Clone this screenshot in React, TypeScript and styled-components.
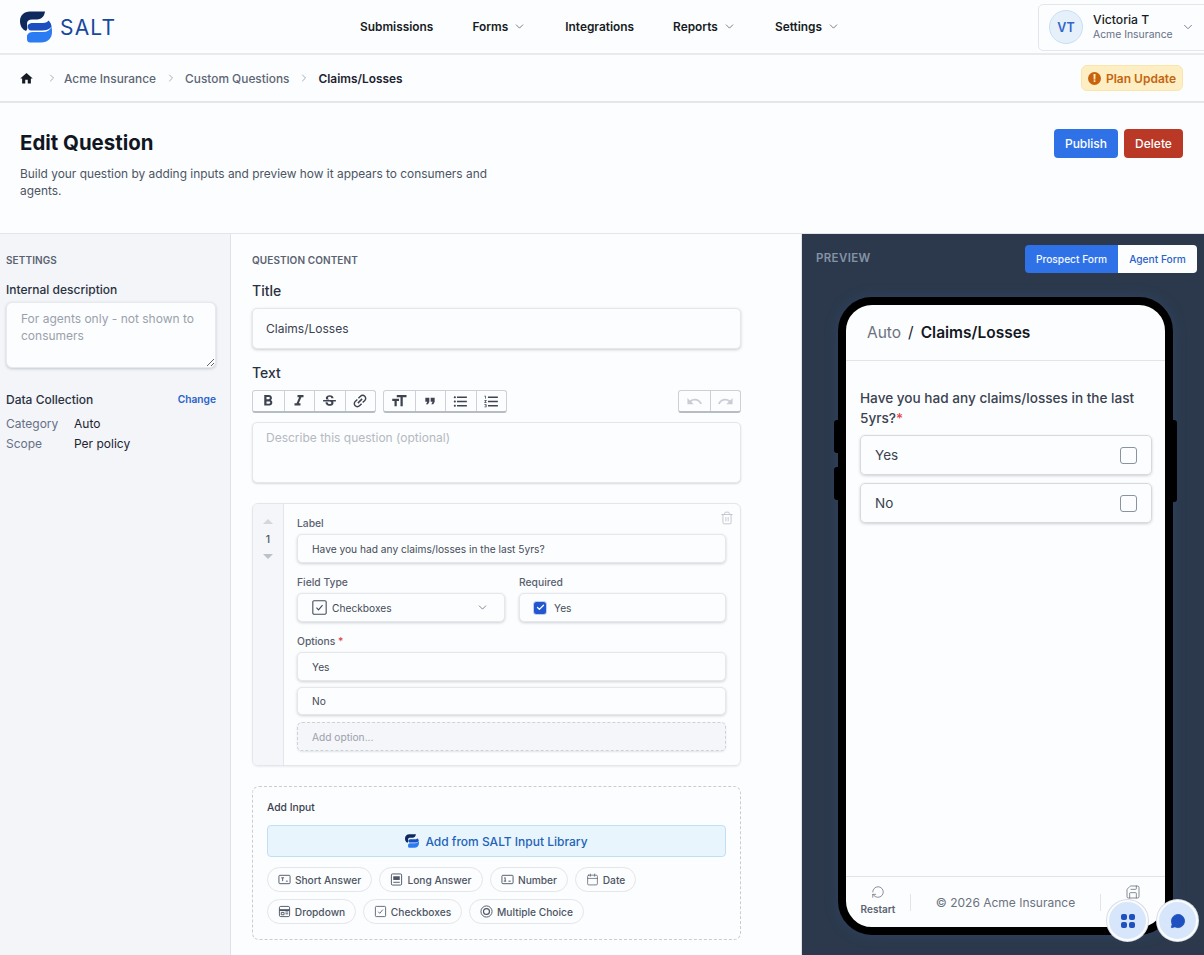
import React from "react";
import styled, { createGlobalStyle } from "styled-components";
import { ChevronRight, ChevronDown, Trash2, Check, Calendar, RotateCw, Save, MessageCircle } from "lucide-react";
import {
  MdFormatSize, MdFormatQuote, MdHome, MdFormatBold, MdFormatItalic, MdStrikethroughS, MdLink,
  MdFormatListBulleted, MdFormatListNumbered, MdUndo, MdRedo,
} from "react-icons/md";

const Global = createGlobalStyle`
  html, body { margin: 0; padding: 0; background: #fcfdfe; }
  * { box-sizing: border-box; }
  body { font-family: Inter, "Liberation Sans", sans-serif; color: #111827; -webkit-font-smoothing: antialiased; }
  input, textarea { font-family: inherit; }
`;

const Page = styled.div`
  width: 1204px; height: 955px; overflow: hidden; display: flex; flex-direction: column; position: relative; background: #fcfdfe;
`;
const TopBar = styled.header`
  height: 55px; flex: none; display: flex; align-items: center; border-bottom: 2px solid #e8eaed; padding-left: 20px; position: relative;
`;
const Brand = styled.div`
  display: flex; align-items: center; gap: 8px; width: 340px; flex: none; margin-top: 1px;
`;
const BrandName = styled.span`
  font-size: 21px; font-weight: 400; letter-spacing: 1.2px; color: #17479e; line-height: 1; margin-top: 1px;
`;
const Nav = styled.nav`
  display: flex; align-items: center; gap: 39px; flex: 1;
`;
const NavItem = styled.span`
  display: inline-flex; align-items: center; gap: 5px; font-size: 11.88px; font-weight: 600; color: #161b24; white-space: nowrap;
  svg { color: #5b6472; }
`;
const UserBox = styled.div`
  width: 172px; height: 47px; margin-top: 1px; margin-right: -6px; flex: none; border: 1px solid #e3e6ea; border-radius: 5px;
  display: flex; align-items: center; padding-left: 10px; gap: 10px;
`;
const Avatar = styled.div`
  width: 34px; height: 34px; flex: none; border-radius: 50%; background: #e6f0fb; border: 1px solid #c9def5; color: #2f66c8;
  font-size: 12.5px; font-weight: 600; display: flex; align-items: center; justify-content: center;
`;
const UserText = styled.div`
  display: flex; flex-direction: column; flex: 1; gap: 1px; min-width: 0; white-space: nowrap;
`;
const UserName = styled.span`
  font-size: 12.2px; font-weight: 500; color: #161b24; line-height: 15px;
`;
const UserOrg = styled.span`
  font-size: 10.4px; font-weight: 400; color: #667085; line-height: 14px;
`;
const Crumbs = styled.div`
  height: 48px; flex: none; display: flex; align-items: center; border-bottom: 2px solid #e4e6e9; padding: 0 21px;
`;
const CrumbLink = styled.span<{ $current?: boolean }>`
  font-size: 11.88px; font-weight: ${p => (p.$current ? 600 : 500)}; color: ${p => (p.$current ? "#1d2330" : "#5c6675")}; white-space: nowrap;
`;
const CrumbSep = styled.span`
  width: 29px; display: flex; justify-content: center; color: #8a93a0;
`;
const CrumbHome = styled.span`
  display: flex; color: #161b24; margin-left: -2px; width: 16px;
`;
const CrumbFirstSep = styled(CrumbSep)`
  width: 29px; padding-left: 5px;
`;
const CrumbSpacer = styled.div`flex: 1;`;
const PlanBadge = styled.div`
  width: 102px; height: 26px; background: #fdeec4; border: 1px solid #fbe5a8; border-radius: 6px; display: flex; align-items: center; justify-content: center; gap: 5px;
  font-size: 12px; font-weight: 600; color: #c4650f; white-space: nowrap;
`;
const AlertDot = styled.span`
  width: 13px; height: 13px; border-radius: 50%; background: #c9620c; color: #fdeec4; font-size: 10px; font-weight: 800; line-height: 13px; text-align: center;
`;
const PageHead = styled.div`
  height: 131px; flex: none; display: flex; justify-content: space-between; padding: 26px 21px 0 20px; border-bottom: 1px solid #e2e5e9;
`;
const HeadText = styled.div`width: 490px; padding-top: 1px;`;
const Title = styled.h1`
  margin: 0; font-size: 20.4px; font-weight: 700; line-height: 26px; color: #111722;
`;
const Sub = styled.p`
  margin: 9px 0 0; font-size: 11.9px; line-height: 17px; color: #4b5563;
`;
const Actions = styled.div`
  display: flex; gap: 6px; align-items: flex-start;
`;
const ActionBtn = styled.button<{ $bg: string; $w: number }>`
  height: 29px; width: ${p => p.$w}px; border: none; border-radius: 4px; background: ${p => p.$bg}; color: #fff; font-size: 12px; font-weight: 500; font-family: inherit; padding: 0;
`;
const Panels = styled.div`
  flex: 1; display: flex; min-height: 0;
`;
const Side = styled.aside`
  width: 231px; flex: none; background: #f3f5f9; border-right: 1px solid #dfe3e8; padding: 20px 14px 0 6px;
`;
const SectionLabel = styled.div`
  font-size: 10px; font-weight: 600; letter-spacing: .1px; color: #5a6270; line-height: 13px; text-transform: uppercase;
`;
const SideLabel = styled.div`
  font-size: 12px; font-weight: 500; color: #2a3140; margin-top: 15px; line-height: 15px;
`;
const SideArea = styled.textarea`
  display: block; width: 100%; height: 66px; margin: 5px 0 0; border: 1px solid #e7e9ed; border-radius: 6px; background: #fcfdfe;
  box-shadow: 0 1px 3px rgba(30, 40, 60, .22); padding: 7px 14px; font-size: 12px; line-height: 17px; resize: vertical; outline: none;
  &::placeholder { color: #9aa1ac; }
`;
const DataHead = styled.div`
  display: flex; justify-content: space-between; align-items: center; margin-top: 24px; height: 15px;
`;
const DataTitle = styled.span`
  font-size: 12px; font-weight: 500; color: #2a3140;
`;
const ChangeLink = styled.span`
  font-size: 10.2px; font-weight: 600; color: #2a62c9; margin-bottom: 2px;
`;
const MetaGrid = styled.dl`
  display: grid; grid-template-columns: 68px 1fr; grid-auto-rows: 20px; margin: 6px 0 0; align-items: center;
  font-size: 12px;
`;
const MetaKey = styled.dt`color: #667085;`;
const MetaVal = styled.dd`margin: 0; color: #1d2330;`;
const Editor = styled.main`
  width: 571px; flex: none; padding: 20px 60px 0 21px; overflow: hidden; border-right: 1px solid #dfe3e8;
`;
const FieldLabel = styled.div`
  font-size: 14px; font-weight: 500; color: #2a3140; line-height: 18px;
`;
const TitleLabel = styled(FieldLabel)`margin-top: 15px;`;
const TextLabel = styled(FieldLabel)`margin-top: 15px;`;
const BigInput = styled.input`
  display: block; width: 100%; height: 41px; margin-top: 8px; border: 1px solid #e5e7eb; border-radius: 5px; background: #fcfdfe;
  box-shadow: 0 1px 3px rgba(30, 40, 60, .22); padding: 0 13px; font-size: 12px; color: #394150; outline: none;
`;
const Toolbar = styled.div`
  display: flex; gap: 7px; margin-top: 8px;
`;
const ToolGroup = styled.div<{ $right?: boolean }>`
  display: flex; height: 23px; border: 1px solid #cdd1d6; border-bottom: 2px solid #b7bcc3; border-radius: 3px; overflow: hidden; background: #fcfdfe;
  ${p => (p.$right ? "margin-left: auto;" : "")}
`;
const ToolBtn = styled.span<{ $muted?: boolean }>`
  width: 30.5px; display: flex; align-items: center; justify-content: center; color: ${p => (p.$muted ? "#c9cdd3" : "#3d4450")};
  & + & { border-left: 1px solid #cdd1d6; }
`;
const DescBox = styled.textarea`
  display: block; width: 100%; height: 61px; margin: 9px 0 0; border: 1px solid #e5e7eb; border-radius: 5px; background: #fcfdfe; padding: 7px 13px;
  box-shadow: 0 1px 2px rgba(30, 40, 60, .16); font-size: 12px; line-height: 16px; outline: none; resize: none;
  &::placeholder { color: #b4b9c1; }
`;
const InputCard = styled.section`
  display: flex; height: 263px; margin-top: 20px; border: 1px solid #e3e6ea; border-radius: 6px; box-shadow: 0 1px 2px rgba(30, 40, 60, .08); overflow: hidden; position: relative;
`;
const Rail = styled.div`
  width: 31px; flex: none; background: #f4f6f9; border-right: 1px solid #e3e6ea; display: flex; flex-direction: column; align-items: center; padding-top: 15px;
`;
const RailUp = styled.span`
  width: 0; height: 0; border-left: 5px solid transparent; border-right: 5px solid transparent; border-bottom: 5px solid #d3d7dc;
`;
const RailDown = styled.span`
  width: 0; height: 0; border-left: 5px solid transparent; border-right: 5px solid transparent; border-top: 5px solid #bcc2ca;
`;
const RailNum = styled.span`
  font-size: 10.5px; color: #4b5563; line-height: 14px; margin: 9px 0 7px; font-weight: 500;
`;
const CardBody = styled.div`
  flex: 1; padding: 13px 14px 0 13px; display: flex; flex-direction: column;
`;
const TrashBtn = styled.span`
  position: absolute; top: 7px; right: 6px; color: #b4bac2; display: flex;
`;
const MiniLabel = styled.div`
  font-size: 10.3px; font-weight: 500; color: #59616f; line-height: 13px; margin-bottom: 4px;
`;
const Star = styled.span`color: #e5484d;`;
const MiniInput = styled.input<{ $h?: number }>`
  display: block; width: 100%; height: ${p => p.$h ?? 29}px; border: 1px solid #e5e7eb; border-radius: 5px; background: #fcfdfe; padding: 0 14px;
  box-shadow: 0 1px 3px rgba(30, 40, 60, .2); font-size: 10.2px; color: #434b58; outline: none; font-weight: 400; flex: none;
`;
const TwoCol = styled.div`
  display: grid; grid-template-columns: 208px 207px; gap: 14px; margin-top: 13px;
`;
const FakeField = styled.div`
  height: 29px; border: 1px solid #e5e7eb; border-radius: 5px; background: #fcfdfe; box-shadow: 0 1px 3px rgba(30, 40, 60, .2);
  display: flex; align-items: center; font-size: 10.2px; color: #434b58;
`;
const SelectField = styled(FakeField)`
  padding: 0 15px 0 13px; gap: 4px; svg:last-child { margin-left: auto; color: #667085; }
`;
const CheckField = styled(FakeField)`
  padding-left: 14px; gap: 8px;
`;
const CheckOn = styled.span`
  width: 12px; height: 12px; border-radius: 2.5px; background: #2257cf; color: #fff; display: flex; align-items: center; justify-content: center; box-shadow: 0 0 0 1px #bcd0f2;
`;
const OptionsBlock = styled.div`
  margin-top: 13px; display: flex; flex-direction: column;
`;
const OptionStack = styled.div`
  display: flex; flex-direction: column; gap: 6px;
`;
const AddOption = styled.div`
  height: 29px; border: 1px dashed #cdd2d9; border-radius: 5px; background: #f5f6f9; padding-left: 14px; display: flex; align-items: center; font-size: 10.2px; color: #9aa1ac;
  box-shadow: 0 1px 2px rgba(30, 40, 60, .12); margin-top: 1px;
`;
const AddBox = styled.section`
  height: 154px; margin-top: 20px; border: 1px dashed #c9cdd3; border-radius: 7px; padding: 14px 14px 0;
`;
const AddTitle = styled.div`
  font-size: 10.3px; font-weight: 500; color: #3a4250; line-height: 13px;
`;
const LibBtn = styled.div`
  height: 32px; margin-top: 11px; border: 1px solid #bfdff5; border-radius: 4px; background: #e9f5fd; display: flex; align-items: center; justify-content: center; gap: 6px;
  font-size: 12px; font-weight: 500; color: #2363b8;
`;
const ChipRow = styled.div`
  display: flex; flex-wrap: wrap; gap: 7px; margin-top: 10px;
`;
const Chip = styled.span<{ $w: number }>`
  height: 25px; width: ${p => p.$w}px; border: 1px solid #e3e6ea; border-radius: 13px; display: inline-flex; align-items: center; justify-content: center; gap: 4px;
  font-size: 10.2px; font-weight: 500; color: #4d5563; white-space: nowrap; background: #fcfdfe;
  svg { flex: none; color: #4d5563; }
`;
const Preview = styled.aside`
  flex: 1; background: #2c394c; position: relative; display: flex; flex-direction: column; padding: 11px 7px 0 14px; overflow: hidden;
`;
const PreviewHead = styled.div`
  display: flex; justify-content: space-between; align-items: center; height: 28px;
`;
const PreviewLabel = styled.span`
  font-size: 11.5px; font-weight: 600; color: #8593a6; letter-spacing: .35px; margin-top: -2px;
`;
const Seg = styled.div`
  display: flex; height: 28px; border-radius: 4px; overflow: hidden;
`;
const SegBtn = styled.span<{ $on?: boolean; $w: number }>`
  width: ${p => p.$w}px; display: flex; align-items: center; justify-content: center; font-size: 10.2px; font-weight: 500;
  background: ${p => (p.$on ? "#2f72e8" : "#fcfdfe")}; color: ${p => (p.$on ? "#f4f8ff" : "#2a62c9")};
`;
const PhoneWrap = styled.div`
  position: relative; width: 335px; height: 638px; margin: 24px 0 0 22px; flex: none;
`;
const Phone = styled.div`
  width: 100%; height: 100%; background: #fcfdfe; border: 8px solid #000; border-radius: 34px; overflow: hidden; display: flex; flex-direction: column;
  box-shadow: 0 0 14px rgba(50, 95, 150, .28);
`;
const SideKey = styled.span<{ $left?: boolean; $top: number; $h: number }>`
  position: absolute; top: ${p => p.$top}px; height: ${p => p.$h}px; width: 5px; background: #000;
  ${p => (p.$left ? "left: -4px; border-radius: 3px 0 0 3px;" : "right: -4px; border-radius: 0 3px 3px 0;")}
`;
const PhoneHead = styled.div`
  height: 56px; flex: none; border-bottom: 1px solid #e2e4e8; padding: 0 0 0 21px; display: flex; align-items: center; gap: 7px; font-size: 15.5px;
`;
const PhoneCrumb = styled.span`color: #6b7280;`;
const PhoneSlash = styled.span`color: #1d2330;`;
const PhoneTitle = styled.span`font-weight: 600; color: #14181f;`;
const PhoneBody = styled.div`
  flex: 1; padding: 27px 13px 0 14px;
`;
const Question = styled.div`
  font-size: 13.6px; font-weight: 500; line-height: 20px; color: #3a4250; margin-bottom: 7px;
`;
const OptionCard = styled.div`
  height: 40px; border: 1px solid #d6d9de; border-radius: 5px; box-shadow: 0 1px 3px rgba(30, 40, 60, .2); padding: 0 14px; display: flex; align-items: center; justify-content: space-between;
  font-size: 13.5px; color: #3a4250; margin-bottom: 8px;
`;
const Box = styled.span`
  width: 17px; height: 17px; border: 1.5px solid #8a93a0; border-radius: 3px;
`;
const PhoneFoot = styled.div`
  height: 51px; flex: none; border-top: 1px solid #e2e4e8; display: flex; align-items: center; position: relative;
`;
const FootAction = styled.div`
  width: 64px; display: flex; flex-direction: column; align-items: center; gap: 4px; font-size: 10px; font-weight: 600; color: #5b6472; line-height: 12px; flex: none; margin-top: -4px;
  svg { color: #5b6472; }
`;
const FootCopy = styled.div`
  flex: 1; text-align: center; font-size: 12px; color: #6b7280; border-left: 1px solid #e2e4e8; border-right: 1px solid #e2e4e8; line-height: 17px;
`;
const Fab = styled.span<{ $right: number }>`
  position: absolute; right: ${p => p.$right}px; bottom: 14px; width: 41px; height: 41px; border-radius: 50%; background: #d8e6fb; border: 2px solid #fbfcfe;
  box-shadow: 0 0 0 1px #d8dce2; display: flex; align-items: center; justify-content: center; color: #1e50c0;
`;
const DotGrid = styled.span`
  display: grid; grid-template-columns: 6px 6px; gap: 2px;
`;
const Dot = styled.i`
  display: block; width: 6px; height: 6px; border-radius: 2px; background: #1e50c0;
`;

function Logo({ size = 32 }: { size?: number }) {
  return (
    <svg width={size} height={size} viewBox="0 0 32 32" aria-hidden style={{ flex: "none" }}>
      <path d="M25 .5C24.5 5 22 8 17 8.5H12C9 8.5 7 10 7 12.5C7 15 8.5 17 6 20C2 18.5 0 14.5 0 10C0 4.5 4 .5 10 .5Z" fill="#0e2a5c" />
      <path d="M8 14C9 12.5 11 12 13 12H23C26 12 27.5 11 28.5 9.5C30.5 11.5 31.5 13.5 31.5 16C29 18.5 26 19.5 22 19.5H11C9 19.5 8 18 8 16Z" fill="#1b4fc0" />
      <path d="M7 24.5C8 22 10 21 13 21H23C27 21 30 19 31.5 16C32 17.5 32 19 32 21C32 27 28 31.5 21 31.5H10C8 31.5 7 30 7 28Z" fill="#2b7bf2" />
    </svg>
  );
}

function IconShort() {
  return (
    <svg width="13" height="13" viewBox="0 0 14 14" fill="none" stroke="currentColor" aria-hidden>
      <rect x="1" y="2.5" width="12" height="9" rx="1" />
      <path d="M3.5 5.2h3M5 5.2v3.6M8.5 8.8h2" />
    </svg>
  );
}
function IconLong() {
  return (
    <svg width="13" height="13" viewBox="0 0 14 14" fill="none" stroke="currentColor" aria-hidden>
      <rect x="1.5" y="1" width="11" height="12" rx="1.2" />
      <path d="M3.5 3.5h7v4h-7z" fill="currentColor" stroke="none" />
      <path d="M3.5 10h7" />
    </svg>
  );
}
function IconNumber() {
  return (
    <svg width="13" height="13" viewBox="0 0 14 14" fill="none" stroke="currentColor" aria-hidden>
      <rect x="1" y="2.5" width="12" height="9" rx="1" />
      <path d="M3.5 5.5l1-.6v3.9M3 8.8h2.6M8 8.8h2.5" />
    </svg>
  );
}
function IconDropdown() {
  return (
    <svg width="13" height="13" viewBox="0 0 14 14" fill="none" stroke="currentColor" aria-hidden>
      <rect x="1.5" y="1.5" width="11" height="11" rx="1.5" />
      <path d="M1.5 5.5h11" strokeWidth="2" />
      <path d="M8 7.5h3M8 9.5h3M3.5 8h3v2.5h-3z" />
    </svg>
  );
}
function IconCheckSquare({ size = 13 }: { size?: number }) {
  return (
    <svg width={size} height={size} viewBox="0 0 14 14" fill="none" stroke="currentColor" strokeWidth={0.9} aria-hidden>
      <rect x="1.5" y="1.5" width="11" height="11" rx="1" />
      <path d="M4.5 7.2l1.7 1.8 3.3-4" />
    </svg>
  );
}
function IconRadio() {
  return (
    <svg width="13" height="13" viewBox="0 0 14 14" fill="none" stroke="currentColor" aria-hidden>
      <circle cx="7" cy="7" r="6" />
      <circle cx="7" cy="7" r="3.2" strokeWidth="1.3" />
    </svg>
  );
}

export default function App() {
  return (
    <Page>
      <Global />
      <TopBar>
        <Brand>
          <Logo />
          <BrandName>SALT</BrandName>
        </Brand>
        <Nav>
          <NavItem>Submissions</NavItem>
          <NavItem>Forms <ChevronDown size={13} strokeWidth={1.5} /></NavItem>
          <NavItem>Integrations</NavItem>
          <NavItem>Reports <ChevronDown size={13} strokeWidth={1.5} /></NavItem>
          <NavItem>Settings <ChevronDown size={13} strokeWidth={1.5} /></NavItem>
        </Nav>
        <UserBox>
          <Avatar>VT</Avatar>
          <UserText>
            <UserName>Victoria T</UserName>
            <UserOrg>Acme Insurance</UserOrg>
          </UserText>
          <ChevronDown size={14} strokeWidth={1.5} color="#667085" style={{ marginRight: 14, flex: "none" }} />
        </UserBox>
      </TopBar>

      <Crumbs>
        <CrumbHome><MdHome size={15} /></CrumbHome>
        <CrumbFirstSep><ChevronRight size={12} strokeWidth={1.5} /></CrumbFirstSep>
        <CrumbLink>Acme Insurance</CrumbLink>
        <CrumbSep><ChevronRight size={12} strokeWidth={1.5} /></CrumbSep>
        <CrumbLink>Custom Questions</CrumbLink>
        <CrumbSep><ChevronRight size={12} strokeWidth={1.5} /></CrumbSep>
        <CrumbLink $current>Claims/Losses</CrumbLink>
        <CrumbSpacer />
        <PlanBadge><AlertDot>!</AlertDot>Plan Update</PlanBadge>
      </Crumbs>

      <PageHead>
        <HeadText>
          <Title>Edit Question</Title>
          <Sub>Build your question by adding inputs and preview how it appears to consumers and agents.</Sub>
        </HeadText>
        <Actions>
          <ActionBtn $bg="#2f72e8" $w={64}>Publish</ActionBtn>
          <ActionBtn $bg="#b93826" $w={59}>Delete</ActionBtn>
        </Actions>
      </PageHead>

      <Panels>
        <Side>
          <SectionLabel>Settings</SectionLabel>
          <SideLabel>Internal description</SideLabel>
          <SideArea readOnly placeholder="For agents only - not shown to consumers" />
          <DataHead>
            <DataTitle>Data Collection</DataTitle>
            <ChangeLink>Change</ChangeLink>
          </DataHead>
          <MetaGrid>
            <MetaKey>Category</MetaKey>
            <MetaVal>Auto</MetaVal>
            <MetaKey>Scope</MetaKey>
            <MetaVal>Per policy</MetaVal>
          </MetaGrid>
        </Side>

        <Editor>
          <SectionLabel>Question Content</SectionLabel>
          <TitleLabel>Title</TitleLabel>
          <BigInput readOnly value="Claims/Losses" />
          <TextLabel>Text</TextLabel>
          <Toolbar>
            <ToolGroup>
              <ToolBtn><MdFormatBold size={18} /></ToolBtn>
              <ToolBtn><MdFormatItalic size={18} /></ToolBtn>
              <ToolBtn><MdStrikethroughS size={17} /></ToolBtn>
              <ToolBtn><MdLink size={18} style={{ transform: "rotate(-45deg)" }} /></ToolBtn>
            </ToolGroup>
            <ToolGroup>
              <ToolBtn><MdFormatSize size={18} /></ToolBtn>
              <ToolBtn><MdFormatQuote size={16} /></ToolBtn>
              <ToolBtn><MdFormatListBulleted size={17} /></ToolBtn>
              <ToolBtn><MdFormatListNumbered size={17} /></ToolBtn>
            </ToolGroup>
            <ToolGroup $right>
              <ToolBtn $muted><MdUndo size={17} /></ToolBtn>
              <ToolBtn $muted><MdRedo size={17} /></ToolBtn>
            </ToolGroup>
          </Toolbar>
          <DescBox readOnly placeholder="Describe this question (optional)" />

          <InputCard>
            <TrashBtn><Trash2 size={14} strokeWidth={1.3} /></TrashBtn>
            <Rail>
              <RailUp />
              <RailNum>1</RailNum>
              <RailDown />
            </Rail>
            <CardBody>
              <MiniLabel>Label</MiniLabel>
              <MiniInput readOnly value="Have you had any claims/losses in the last 5yrs?" />
              <TwoCol>
                <div>
                  <MiniLabel>Field Type</MiniLabel>
                  <SelectField>
                    <IconCheckSquare size={17} />
                    Checkboxes
                    <ChevronDown size={13} strokeWidth={1.5} />
                  </SelectField>
                </div>
                <div>
                  <MiniLabel>Required</MiniLabel>
                  <CheckField>
                    <CheckOn><Check size={9} strokeWidth={3.5} /></CheckOn>
                    Yes
                  </CheckField>
                </div>
              </TwoCol>
              <OptionsBlock>
                <MiniLabel>Options <Star>*</Star></MiniLabel>
                <OptionStack>
                  <MiniInput readOnly value="Yes" />
                  <MiniInput readOnly value="No" $h={28} />
                  <AddOption>Add option...</AddOption>
                </OptionStack>
              </OptionsBlock>
            </CardBody>
          </InputCard>

          <AddBox>
            <AddTitle>Add Input</AddTitle>
            <LibBtn><Logo size={14} />Add from SALT Input Library</LibBtn>
            <ChipRow>
              <Chip $w={105}><IconShort />Short Answer</Chip>
              <Chip $w={104}><IconLong />Long Answer</Chip>
              <Chip $w={78}><IconNumber />Number</Chip>
              <Chip $w={61}><Calendar size={13} strokeWidth={1.3} />Date</Chip>
              <Chip $w={89}><IconDropdown />Dropdown</Chip>
              <Chip $w={99}><IconCheckSquare />Checkboxes</Chip>
              <Chip $w={115}><IconRadio />Multiple Choice</Chip>
            </ChipRow>
          </AddBox>
        </Editor>

        <Preview>
          <PreviewHead>
            <PreviewLabel>PREVIEW</PreviewLabel>
            <Seg>
              <SegBtn $on $w={93}>Prospect Form</SegBtn>
              <SegBtn $w={79}>Agent Form</SegBtn>
            </Seg>
          </PreviewHead>
          <PhoneWrap>
            <SideKey $left $top={123} $h={33} />
            <SideKey $left $top={170} $h={33} />
            <SideKey $top={123} $h={82} />
            <Phone>
              <PhoneHead>
                <PhoneCrumb>Auto</PhoneCrumb>
                <PhoneSlash>/</PhoneSlash>
                <PhoneTitle>Claims/Losses</PhoneTitle>
              </PhoneHead>
              <PhoneBody>
                <Question>Have you had any claims/losses in the last 5yrs?<Star>*</Star></Question>
                <OptionCard>Yes<Box /></OptionCard>
                <OptionCard>No<Box /></OptionCard>
              </PhoneBody>
              <PhoneFoot>
                <FootAction><RotateCw size={14} strokeWidth={1.2} style={{ transform: "scale(-1,-1)" }} />Restart</FootAction>
                <FootCopy>© 2026 Acme Insurance</FootCopy>
                <FootAction><Save size={16} strokeWidth={1.1} style={{ transform: "scaleX(-1)" }} />Save</FootAction>
              </PhoneFoot>
            </Phone>
          </PhoneWrap>
          <Fab $right={56}><DotGrid><Dot /><Dot /><Dot /><Dot /></DotGrid></Fab>
          <Fab $right={6}><MessageCircle size={16} fill="currentColor" strokeWidth={1} /></Fab>
        </Preview>
      </Panels>
    </Page>
  );
}
